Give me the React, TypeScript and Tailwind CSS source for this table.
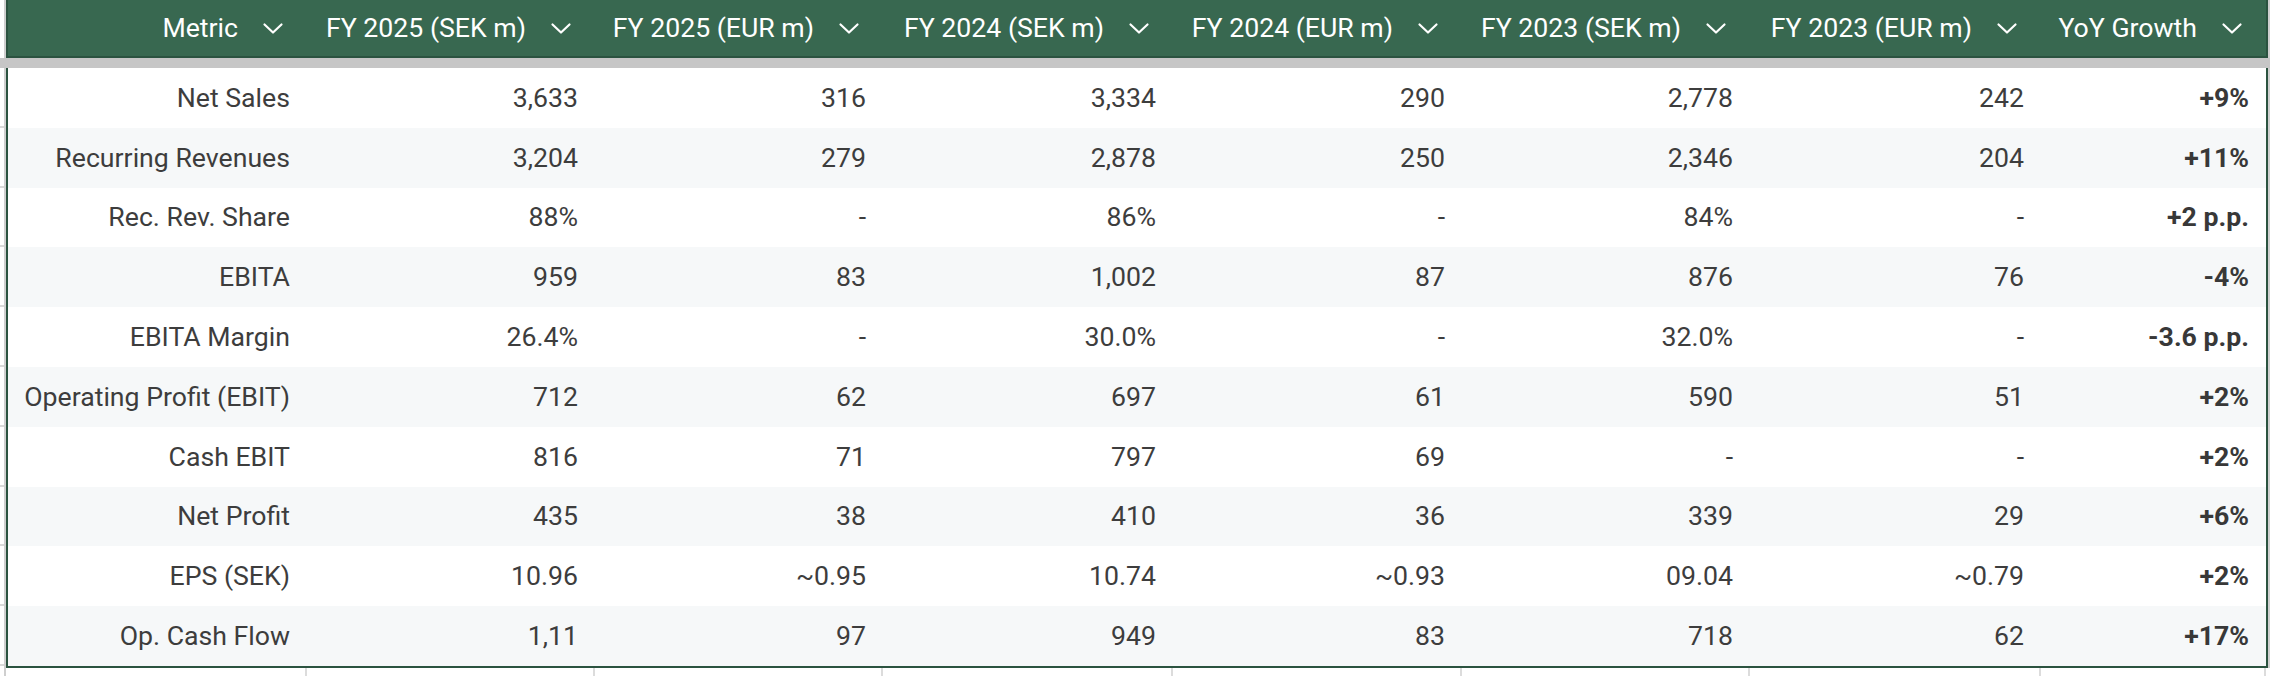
import React from "react";

const COLS = ["299px", "288px", "288px", "290px", "289px", "288px", "291px", "225px"];
const GRID = "grid grid-cols-[299px_288px_288px_290px_289px_288px_291px_225px]";

const HEADERS = [
  "Metric",
  "FY 2025 (SEK m)",
  "FY 2025 (EUR m)",
  "FY 2024 (SEK m)",
  "FY 2024 (EUR m)",
  "FY 2023 (SEK m)",
  "FY 2023 (EUR m)",
  "YoY Growth",
];

const ROWS: string[][] = [
  ["Net Sales", "3,633", "316", "3,334", "290", "2,778", "242", "+9%"],
  ["Recurring Revenues", "3,204", "279", "2,878", "250", "2,346", "204", "+11%"],
  ["Rec. Rev. Share", "88%", "-", "86%", "-", "84%", "-", "+2 p.p."],
  ["EBITA", "959", "83", "1,002", "87", "876", "76", "-4%"],
  ["EBITA Margin", "26.4%", "-", "30.0%", "-", "32.0%", "-", "-3.6 p.p."],
  ["Operating Profit (EBIT)", "712", "62", "697", "61", "590", "51", "+2%"],
  ["Cash EBIT", "816", "71", "797", "69", "-", "-", "+2%"],
  ["Net Profit", "435", "38", "410", "36", "339", "29", "+6%"],
  ["EPS (SEK)", "10.96", "~0.95", "10.74", "~0.93", "09.04", "~0.79", "+2%"],
  ["Op. Cash Flow", "1,11", "97", "949", "83", "718", "62", "+17%"],
];

function Chevron() {
  return (
    <svg width="22" height="13" viewBox="0 0 22 13" className="shrink-0">
      <polyline points="2.5,2.5 11,10.5 19.5,2.5" fill="none" stroke="white" strokeWidth="2.2" strokeLinecap="round" strokeLinejoin="round" />
    </svg>
  );
}

export default function App() {
  return (
    <div className="flex h-[676px] w-[2270px] flex-col overflow-hidden bg-white font-['Roboto',sans-serif] text-[26.67px] text-[#3d3d3d]">
      {/* Header */}
      <div className="flex h-[58px] shrink-0">
        <div className="w-[4px]" />
        <div className="w-[2px] bg-[#cfcfcf]" />
        <div className={`${GRID} border-x-2 border-b-2 border-[#2b5340] bg-[#386850] text-white`}>
          {HEADERS.map((h) => (
            <div key={h} className="flex items-center justify-end gap-[24px] pr-[23px]">
              <span>{h}</span>
              <Chevron />
            </div>
          ))}
        </div>
        <div className="w-[2px] bg-[#cfcfcf]" />
      </div>

      {/* freeze line */}
      <div className="h-[10px] shrink-0 bg-[#c6c6c6]" />

      {/* Body */}
      <div className="flex shrink-0">
        <div className="flex w-[4px] flex-col">
          {ROWS.map((r) => (
            <div key={r[0]} className="h-[59.8px] border-b-2 border-[#d9d9d9]" />
          ))}
        </div>
        <div className="w-[2px] bg-[#cfcfcf]" />
        <div className="flex flex-col border-x-2 border-b-2 border-[#2b5340]">
          {ROWS.map((r, i) => (
            <div key={r[0]} className={`${GRID} h-[59.8px] ${i % 2 === 1 ? "bg-[#f6f8f9]" : "bg-white"}`}>
              {r.map((c, j) => (
                <div
                  key={j}
                  className={`flex items-center justify-end pr-[17px] ${j === 7 ? "font-bold text-[#383838]" : ""}`}
                >
                  {c}
                </div>
              ))}
            </div>
          ))}
        </div>
        <div className="flex w-[2px] flex-col bg-[#cfcfcf]" />
      </div>

      {/* sheet gridlines below */}
      <div className="flex flex-1">
        <div className="w-[4px]" />
        <div className="w-[2px] bg-[#cfcfcf]" />
        <div className="flex">
          {COLS.map((w, i) => (
            <div
              key={i}
              style={{ width: i === 0 ? 301 : w }}
              className="border-r-2 border-[#dcdcdc]"
            />
          ))}
        </div>
      </div>
    </div>
  );
}
